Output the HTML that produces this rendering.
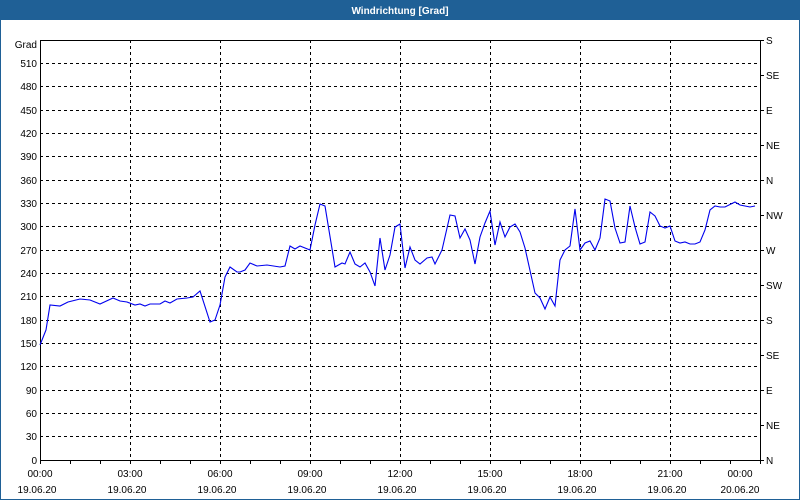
<!DOCTYPE html>
<html><head><meta charset="utf-8"><style>
body{margin:0;width:800px;height:500px;overflow:hidden;background:#fff}
svg{display:block}
text{font-family:"Liberation Sans","DejaVu Sans",sans-serif;font-size:10px;fill:#000}
</style></head><body>
<svg width="800" height="500" viewBox="0 0 800 500" xmlns="http://www.w3.org/2000/svg">
<rect x="0" y="0" width="800" height="500" fill="#fff"/>
<rect x="0" y="0" width="800" height="20" fill="#1f6096"/>
<rect x="0" y="0" width="1" height="500" fill="#1f6096"/>
<rect x="799" y="0" width="1" height="500" fill="#1f6096"/>
<rect x="0" y="499" width="800" height="1" fill="#1f6096"/>
<text x="400" y="14" text-anchor="middle" style="fill:#fff;font-weight:bold;font-size:10px">Windrichtung [Grad]</text>
<g stroke="#000" stroke-width="1" stroke-dasharray="3,3" shape-rendering="crispEdges">
<line x1="40" y1="63.5" x2="760" y2="63.5"/><line x1="40" y1="86.5" x2="760" y2="86.5"/><line x1="40" y1="110.5" x2="760" y2="110.5"/><line x1="40" y1="133.5" x2="760" y2="133.5"/><line x1="40" y1="156.5" x2="760" y2="156.5"/><line x1="40" y1="180.5" x2="760" y2="180.5"/><line x1="40" y1="203.5" x2="760" y2="203.5"/><line x1="40" y1="226.5" x2="760" y2="226.5"/><line x1="40" y1="250.5" x2="760" y2="250.5"/><line x1="40" y1="273.5" x2="760" y2="273.5"/><line x1="40" y1="296.5" x2="760" y2="296.5"/><line x1="40" y1="320.5" x2="760" y2="320.5"/><line x1="40" y1="343.5" x2="760" y2="343.5"/><line x1="40" y1="366.5" x2="760" y2="366.5"/><line x1="40" y1="390.5" x2="760" y2="390.5"/><line x1="40" y1="413.5" x2="760" y2="413.5"/><line x1="40" y1="436.5" x2="760" y2="436.5"/>
<line x1="130.5" y1="40" x2="130.5" y2="460"/><line x1="220.5" y1="40" x2="220.5" y2="460"/><line x1="310.5" y1="40" x2="310.5" y2="460"/><line x1="400.5" y1="40" x2="400.5" y2="460"/><line x1="490.5" y1="40" x2="490.5" y2="460"/><line x1="580.5" y1="40" x2="580.5" y2="460"/><line x1="670.5" y1="40" x2="670.5" y2="460"/>
</g>
<g stroke="#000" stroke-width="1" fill="none" shape-rendering="crispEdges">
<rect x="40.5" y="40.5" width="720" height="420"/>
<path d="M760 40.5h4M760 75.5h4M760 110.5h4M760 145.5h4M760 180.5h4M760 215.5h4M760 250.5h4M760 285.5h4M760 320.5h4M760 355.5h4M760 390.5h4M760 425.5h4M760 460.5h4"/>
<path d="M70.5 460v4M100.5 460v4M130.5 460v4M160.5 460v4M190.5 460v4M220.5 460v4M250.5 460v4M280.5 460v4M310.5 460v4M340.5 460v4M370.5 460v4M400.5 460v4M430.5 460v4M460.5 460v4M490.5 460v4M520.5 460v4M550.5 460v4M580.5 460v4M610.5 460v4M640.5 460v4M670.5 460v4M700.5 460v4M730.5 460v4M40.5 460v4M760.5 460v4"/>
</g>
<g text-anchor="end">
<text x="37" y="48">Grad</text>
<text x="37" y="67">510</text><text x="37" y="90">480</text><text x="37" y="114">450</text><text x="37" y="137">420</text><text x="37" y="160">390</text><text x="37" y="184">360</text><text x="37" y="207">330</text><text x="37" y="230">300</text><text x="37" y="254">270</text><text x="37" y="277">240</text><text x="37" y="300">210</text><text x="37" y="324">180</text><text x="37" y="347">150</text><text x="37" y="370">120</text><text x="37" y="394">90</text><text x="37" y="417">60</text><text x="37" y="440">30</text><text x="37" y="464">0</text>
</g>
<g>
<text x="766" y="44">S</text><text x="766" y="79">SE</text><text x="766" y="114">E</text><text x="766" y="149">NE</text><text x="766" y="184">N</text><text x="766" y="219">NW</text><text x="766" y="254">W</text><text x="766" y="289">SW</text><text x="766" y="324">S</text><text x="766" y="359">SE</text><text x="766" y="394">E</text><text x="766" y="429">NE</text><text x="766" y="464">N</text>
</g>
<g text-anchor="middle">
<text x="40" y="477">00:00</text><text x="130" y="477">03:00</text><text x="220" y="477">06:00</text><text x="310" y="477">09:00</text><text x="400" y="477">12:00</text><text x="490" y="477">15:00</text><text x="580" y="477">18:00</text><text x="670" y="477">21:00</text><text x="740" y="477">00:00</text>
<text x="37" y="493">19.06.20</text><text x="127" y="493">19.06.20</text><text x="217" y="493">19.06.20</text><text x="307" y="493">19.06.20</text><text x="397" y="493">19.06.20</text><text x="487" y="493">19.06.20</text><text x="577" y="493">19.06.20</text><text x="667" y="493">19.06.20</text><text x="740" y="493">20.06.20</text>
</g>
<polyline fill="none" stroke="#0000ee" stroke-width="1.1" points="40,345 46,330 50,305 60,306 68,302 80,299 90,300 100,304 113,298 120,301 127,302 135,305 140,304 145,306 150,304 160,304 165,301 170,303 177,299 187,298 193,297 200,291 210,322 215,320 220,305 225,277 230,267 237,272 240,272 245,270 250,263 257,266 267,265 280,267 285,266 290,246 295,249 300,246 310,250 315,225 320,204 325,206 335,267 342,263 345,264 350,252 355,264 360,267 365,263 370,272 375,286 380,238 385,270 390,255 395,227 400,224 405,268 410,247 415,260 420,264 427,258 432,257 435,264 442,250 450,215 455,216 460,238 465,229 470,240 475,264 480,237 485,223 490,211 495,245 500,222 505,237 510,227 515,224 520,232 525,248 535,293 540,298 545,309 550,297 555,306 560,260 565,250 570,246 575,209 580,250 585,243 590,241 595,250 600,238 605,199 610,201 615,228 620,243 625,242 630,206 635,227 640,244 645,242 650,212 655,216 660,226 665,228 670,226 675,241 680,243 685,242 690,244 695,244 700,242 705,230 710,210 715,206 720,207 725,207 735,202 740,205 750,207 755,206"/>
</svg>
</body></html>
